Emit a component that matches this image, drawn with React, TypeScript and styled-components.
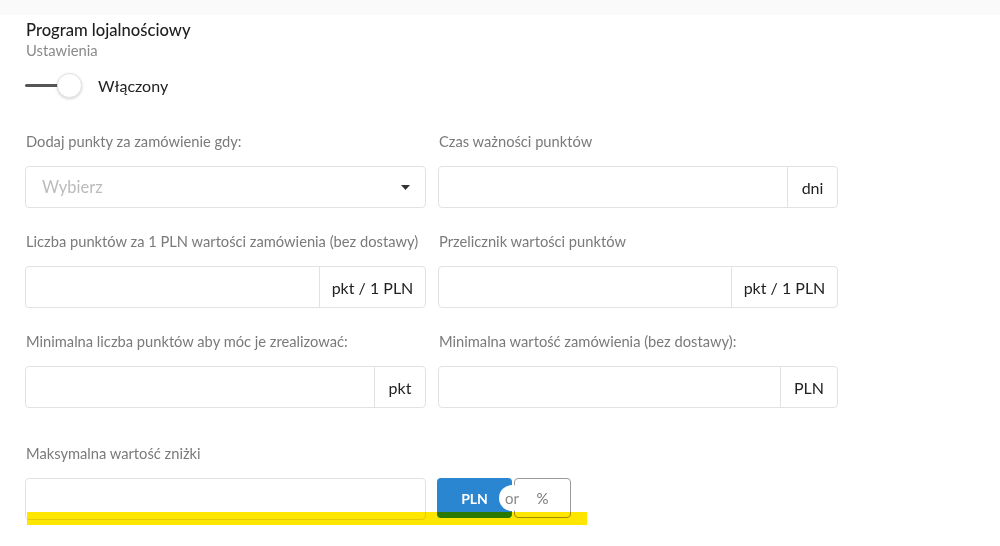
import React from "react";
import styled, { createGlobalStyle } from "styled-components";

const GlobalStyle = createGlobalStyle`
  html, body {
    margin: 0;
    padding: 0;
    background: #ffffff;
    font-family: Lato, "Open Sans", "Liberation Sans", sans-serif;
  }
  * {
    box-sizing: border-box;
  }
`;

const TopStrip = styled.div`
  height: 15px;
  background: #fafafa;
`;

const Page = styled.div`
  position: relative;
  width: 1000px;
  height: 531px;
  padding: 5px 0 0 25px;
`;

const Title = styled.div`
  font-size: 16.6px;
  font-weight: 500;
  line-height: 20px;
  color: #1e1e1e;
  padding-left: 1px;
`;

const Subtitle = styled.div`
  margin-top: 1px;
  font-size: 14.8px;
  line-height: 18px;
  color: #8a8a8a;
  padding-left: 1px;
`;

const SwitchRow = styled.div`
  margin-top: 13px;
  height: 26px;
  display: flex;
  align-items: center;
`;

const SwitchTrack = styled.div`
  position: relative;
  width: 57px;
  height: 26px;
  display: flex;
  align-items: center;
`;

const SwitchLine = styled.div`
  width: 34px;
  height: 3px;
  background: #555;
  border-radius: 2px;
`;

const SwitchThumb = styled.div`
  width: 25px;
  height: 25px;
  margin-left: -2px;
  border-radius: 50%;
  background: #fff;
  border: 1px solid #e2e2e2;
  box-shadow: 0 1px 3px rgba(0, 0, 0, 0.18);
`;

const SwitchLabel = styled.span`
  margin-left: 16px;
  font-size: 16px;
  color: #222;
`;

const Form = styled.div`
  margin-top: 33px;
  display: grid;
  grid-template-columns: 401px 400px;
  column-gap: 12px;
  row-gap: 23px;
`;

const Field = styled.div<{ $extra?: boolean }>`
  display: flex;
  flex-direction: column;
  margin-top: ${({ $extra }) => ($extra ? "12px" : "0")};
`;

const Label = styled.div`
  font-size: 14.7px;
  line-height: 20px;
  color: #7a7a7a;
  margin-bottom: 15px;
  padding-left: 1px;
  white-space: nowrap;
`;

const InputGroup = styled.div`
  display: flex;
  height: 42px;
  border: 1px solid #e2e2e2;
  border-radius: 4px;
  background: #fff;
`;

const Input = styled.div`
  flex: 1;
  display: flex;
  align-items: center;
  padding-left: 16px;
  font-size: 16.5px;
  color: #bbb;
`;

const Addon = styled.div<{ $width: number }>`
  width: ${({ $width }) => $width}px;
  display: flex;
  align-items: center;
  justify-content: center;
  border-left: 1px solid #e2e2e2;
  font-size: 16px;
  color: #222;
  white-space: nowrap;
`;

const Caret = styled.div`
  width: 40px;
  display: flex;
  align-items: center;
  justify-content: center;
`;

const UnitSwitch = styled.div`
  position: relative;
  display: flex;
  height: 40px;
`;

const UnitButton = styled.div<{ $active?: boolean }>`
  width: ${({ $active }) => ($active ? "75px" : "57px")};
  margin-left: ${({ $active }) => ($active ? "-1px" : "2px")};
  display: flex;
  align-items: center;
  justify-content: center;
  border-radius: 4px;
  font-size: ${({ $active }) => ($active ? "14px" : "15px")};
  font-weight: ${({ $active }) => ($active ? 700 : 400)};
  color: ${({ $active }) => ($active ? "#fff" : "#777")};
  background: ${({ $active }) => ($active ? "#2b86d1" : "#fff")};
  border: ${({ $active }) => ($active ? "none" : "1px solid #9a9a9a")};
`;

const OrBadge = styled.div`
  position: absolute;
  left: 61px;
  top: 7px;
  width: 26px;
  height: 26px;
  border-radius: 50%;
  background: #fff;
  display: flex;
  align-items: center;
  justify-content: center;
  font-size: 15px;
  color: #8a8a8a;
`;

const Highlight = styled.div`
  position: absolute;
  left: 27px;
  top: 497px;
  width: 560px;
  height: 13px;
  background: #ffe600;
  mix-blend-mode: multiply;
`;

const App = () => {
  return (
    <>
      <GlobalStyle />
      <TopStrip />
      <Page>
        <Title>Program lojalnościowy</Title>
        <Subtitle>Ustawienia</Subtitle>
        <SwitchRow>
          <SwitchTrack>
            <SwitchLine />
            <SwitchThumb />
          </SwitchTrack>
          <SwitchLabel>Włączony</SwitchLabel>
        </SwitchRow>

        <Form>
          <Field>
            <Label>Dodaj punkty za zamówienie gdy:</Label>
            <InputGroup>
              <Input>Wybierz</Input>
              <Caret>
                <svg width="9" height="5" viewBox="0 0 9 5">
                  <path d="M0 0 L9 0 L4.5 5 Z" fill="#333" />
                </svg>
              </Caret>
            </InputGroup>
          </Field>
          <Field>
            <Label>Czas ważności punktów</Label>
            <InputGroup>
              <Input />
              <Addon $width={50}>dni</Addon>
            </InputGroup>
          </Field>

          <Field>
            <Label>Liczba punktów za 1 PLN wartości zamówienia (bez dostawy)</Label>
            <InputGroup>
              <Input />
              <Addon $width={106}>pkt / 1 PLN</Addon>
            </InputGroup>
          </Field>
          <Field>
            <Label>Przelicznik wartości punktów</Label>
            <InputGroup>
              <Input />
              <Addon $width={106}>pkt / 1 PLN</Addon>
            </InputGroup>
          </Field>

          <Field>
            <Label>Minimalna liczba punktów aby móc je zrealizować:</Label>
            <InputGroup>
              <Input />
              <Addon $width={51}>pkt</Addon>
            </InputGroup>
          </Field>
          <Field>
            <Label>Minimalna wartość zamówienia (bez dostawy):</Label>
            <InputGroup>
              <Input />
              <Addon $width={57}>PLN</Addon>
            </InputGroup>
          </Field>

          <Field $extra>
            <Label>Maksymalna wartość zniżki</Label>
            <InputGroup>
              <Input />
            </InputGroup>
          </Field>
          <Field $extra>
            <Label>&nbsp;</Label>
            <UnitSwitch>
              <UnitButton $active>PLN</UnitButton>
              <UnitButton>%</UnitButton>
              <OrBadge>or</OrBadge>
            </UnitSwitch>
          </Field>
        </Form>
        <Highlight />
      </Page>
    </>
  );
};

export default App;
